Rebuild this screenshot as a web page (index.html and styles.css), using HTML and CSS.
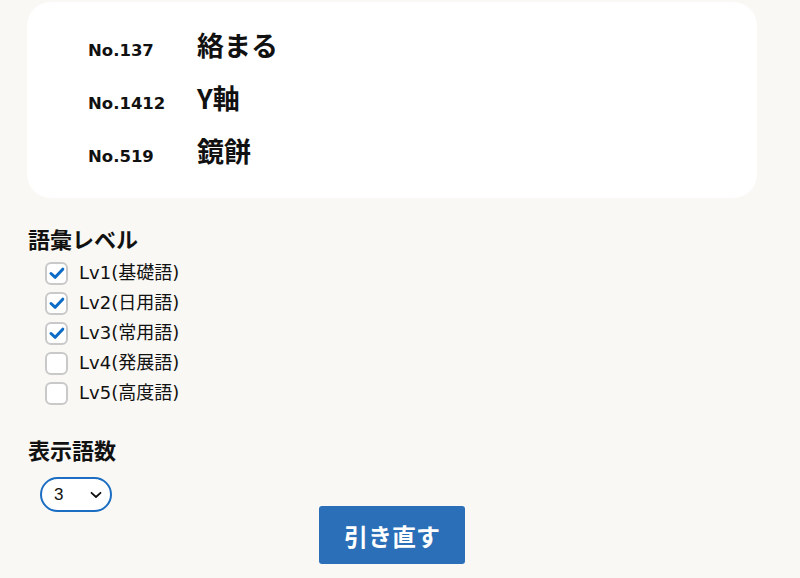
FILE: index.html
```html
<!DOCTYPE html>
<html lang="ja">
<head>
<meta charset="utf-8">
<title>語彙</title>
<link rel="stylesheet" href="styles.css">
</head>
<body>
<main class="wrap">
  <section class="card">
    <div class="row"><span class="no">No.137</span><span class="word">絡まる</span></div>
    <div class="row"><span class="no">No.1412</span><span class="word">Y軸</span></div>
    <div class="row"><span class="no">No.519</span><span class="word">鏡餅</span></div>
  </section>

  <h2 class="heading">語彙レベル</h2>
  <ul class="levels">
    <li><label class="opt"><span class="box checked"><svg viewBox="0 0 22 22" width="22" height="22"><path d="M5 11.5 L9.2 15.3 L16.8 7.2" fill="none" stroke="#0b6bc6" stroke-width="3" stroke-linecap="round" stroke-linejoin="round"/></svg></span><span class="lbl">Lv1(基礎語)</span></label></li>
    <li><label class="opt"><span class="box checked"><svg viewBox="0 0 22 22" width="22" height="22"><path d="M5 11.5 L9.2 15.3 L16.8 7.2" fill="none" stroke="#0b6bc6" stroke-width="3" stroke-linecap="round" stroke-linejoin="round"/></svg></span><span class="lbl">Lv2(日用語)</span></label></li>
    <li><label class="opt"><span class="box checked"><svg viewBox="0 0 22 22" width="22" height="22"><path d="M5 11.5 L9.2 15.3 L16.8 7.2" fill="none" stroke="#0b6bc6" stroke-width="3" stroke-linecap="round" stroke-linejoin="round"/></svg></span><span class="lbl">Lv3(常用語)</span></label></li>
    <li><label class="opt"><span class="box"></span><span class="lbl">Lv4(発展語)</span></label></li>
    <li><label class="opt"><span class="box"></span><span class="lbl">Lv5(高度語)</span></label></li>
  </ul>

  <h2 class="heading heading2">表示語数</h2>
  <div class="count">
    <div class="select">
      <span class="val">3</span>
      <svg class="chev" viewBox="0 0 12 8" width="12" height="8"><path d="M1.5 1.8 L6 6 L10.5 1.8" fill="none" stroke="#111" stroke-width="1.8" stroke-linecap="round" stroke-linejoin="round"/></svg>
    </div>
  </div>
  <div class="actions">
    <button class="btn">引き直す</button>
  </div>
</main>
</body>
</html>
```

FILE: styles.css
```css
html, body {
  margin: 0;
  padding: 0;
}
body {
  background: #f9f8f4;
  font-family: "DejaVu Sans", "Noto Sans CJK JP", sans-serif;
  color: #111;
}
.wrap {
  width: 730px;
  margin-left: 27px;
  padding-top: 2px;
}
.card {
  background: #ffffff;
  border-radius: 24px;
  height: 196px;
  box-sizing: border-box;
  padding: 16px 0 0 61px;
}
.row {
  display: flex;
  align-items: baseline;
  height: 53px;
  line-height: 53px;
}
.no {
  width: 109px;
  font-size: 16.5px;
  font-weight: bold;
}
.word {
  font-family: "Noto Sans CJK JP", sans-serif;
  font-size: 27px;
  font-weight: bold;
}
.heading {
  margin: 25px 0 0 1px;
  font-family: "Noto Sans CJK JP", sans-serif;
  font-size: 22px;
  font-weight: bold;
  line-height: 30px;
  height: 30px;
}
.heading2 {
  margin-top: 26px;
}
.levels {
  list-style: none;
  margin: 5px 0 0 18px;
  padding: 0;
}
.levels li {
  height: 30px;
  display: flex;
  align-items: center;
}
.opt {
  display: flex;
  align-items: center;
  gap: 11px;
}
.box {
  width: 23px;
  height: 23px;
  box-sizing: border-box;
  border: 2px solid #c9c9c9;
  border-radius: 6px;
  background: #fff;
  display: flex;
  align-items: center;
  justify-content: center;
}
.box svg {
  flex: none;
}
.lbl {
  font-size: 18px;
  line-height: 22px;
}
.count {
  margin: 13px 0 0 13px;
  height: 29px;
}
.select {
  position: relative;
  width: 72px;
  height: 35px;
  box-sizing: border-box;
  border: 2px solid #1b6ec2;
  border-radius: 18px;
  background: #fff;
  display: flex;
  align-items: center;
  padding-left: 12px;
}
.val {
  font-family: "Liberation Sans", sans-serif;
  font-size: 17px;
}
.chev {
  position: absolute;
  right: 8px;
  top: 12px;
}
.actions {
  display: flex;
  justify-content: center;
}
.btn {
  width: 146px;
  height: 58px;
  border: none;
  border-radius: 3px;
  background: #2a6fb7;
  color: #fff;
  font-family: "Noto Sans CJK JP", sans-serif;
  font-size: 24px;
  font-weight: bold;
  padding: 0;
}
```
